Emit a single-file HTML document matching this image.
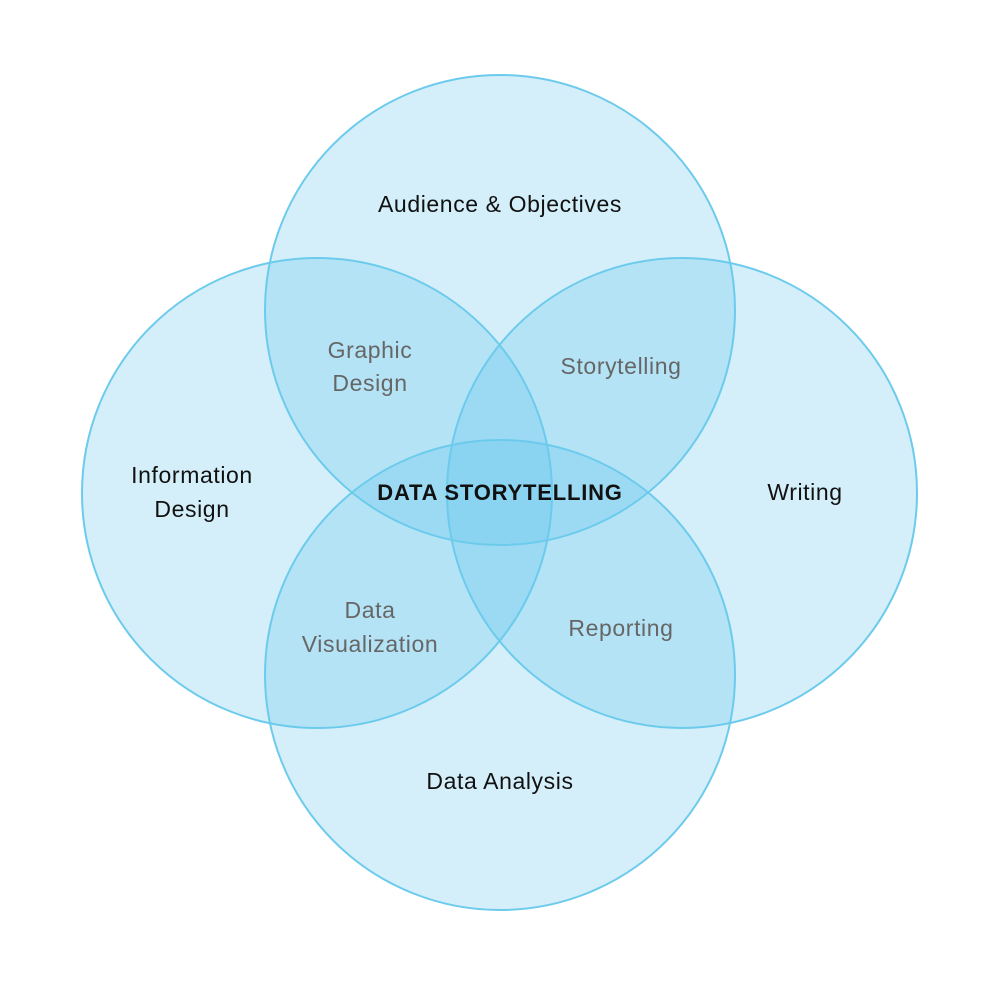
<!DOCTYPE html>
<html><head><meta charset="utf-8"><style>
html,body{margin:0;padding:0;background:#fff;}
svg{display:block;}
text{font-family:"Liberation Sans",sans-serif;font-size:23px;letter-spacing:0.6px;text-anchor:middle;}
</style></head><body>
<svg width="1000" height="986" viewBox="0 0 1000 986">
<g fill="rgb(90,195,235)" fill-opacity="0.26">
<circle cx="500" cy="310" r="235"/>
<circle cx="500" cy="675" r="235"/>
<circle cx="317" cy="493" r="235"/>
<circle cx="682" cy="493" r="235"/>
</g>
<g fill="none" stroke="#6ccbec" stroke-width="2">
<circle cx="500" cy="310" r="235"/>
<circle cx="500" cy="675" r="235"/>
<circle cx="317" cy="493" r="235"/>
<circle cx="682" cy="493" r="235"/>
</g>
<g fill="#111">
<text x="500" y="212">Audience &amp; Objectives</text>
<text x="192" y="483">Information</text>
<text x="192" y="517">Design</text>
<text x="805" y="500">Writing</text>
<text x="500" y="789">Data Analysis</text>
</g>
<g fill="#666">
<text x="370" y="358">Graphic</text>
<text x="370" y="391">Design</text>
<text x="621" y="374">Storytelling</text>
<text x="370" y="618">Data</text>
<text x="370" y="652">Visualization</text>
<text x="621" y="636">Reporting</text>
</g>
<text x="500" y="500" fill="#111" font-weight="bold" style="font-size:22px;letter-spacing:0.8px">DATA STORYTELLING</text>
</svg>
</body></html>
